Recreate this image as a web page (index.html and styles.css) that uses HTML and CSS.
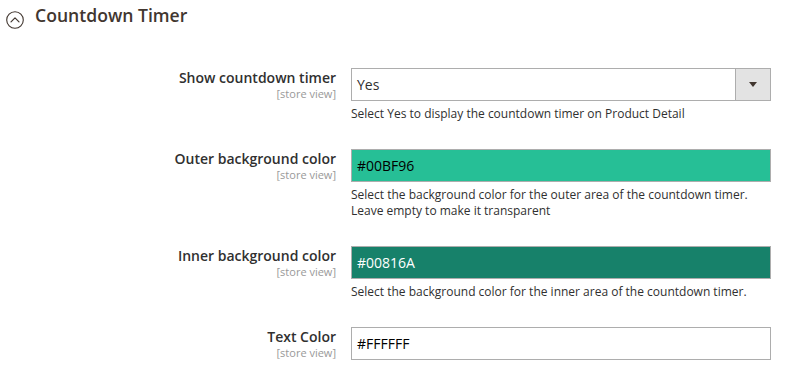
FILE: index.html
```html
<!DOCTYPE html>
<html lang="en">
<head>
<meta charset="utf-8">
<title>Countdown Timer</title>
<link rel="stylesheet" href="styles.css">
</head>
<body>
<div class="section">
  <div class="section-head">
    <svg class="toggle-icon" width="20" height="20" viewBox="0 0 20 20">
      <circle cx="10" cy="10" r="8.3" fill="none" stroke="#41362f" stroke-width="1.1"/>
      <path d="M6 11.8 L10 7.8 L14 11.8" fill="none" stroke="#41362f" stroke-width="1.2" stroke-linecap="round" stroke-linejoin="round"/>
    </svg>
    <span class="section-title">Countdown Timer</span>
  </div>

  <div class="form">
    <div class="row">
      <div class="label">
        <div class="label-text">Show countdown timer</div>
        <div class="scope">[store view]</div>
      </div>
      <div class="field">
        <div class="select">
          <span class="select-value">Yes</span>
          <span class="select-btn"><span class="arrow"></span></span>
        </div>
        <div class="note">Select Yes to display the countdown timer on Product Detail</div>
      </div>
    </div>

    <div class="row">
      <div class="label">
        <div class="label-text">Outer background color</div>
        <div class="scope">[store view]</div>
      </div>
      <div class="field">
        <div class="input outer">#00BF96</div>
        <div class="note">Select the background color for the outer area of the countdown timer.<br>Leave empty to make it transparent</div>
      </div>
    </div>

    <div class="row">
      <div class="label">
        <div class="label-text">Inner background color</div>
        <div class="scope">[store view]</div>
      </div>
      <div class="field">
        <div class="input inner">#00816A</div>
        <div class="note">Select the background color for the inner area of the countdown timer.</div>
      </div>
    </div>

    <div class="row last">
      <div class="label">
        <div class="label-text">Text Color</div>
        <div class="scope">[store view]</div>
      </div>
      <div class="field">
        <div class="input white">#FFFFFF</div>
      </div>
    </div>
  </div>
</div>
</body>
</html>
```

FILE: styles.css
```css
* { box-sizing: border-box; }
html, body {
  margin: 0;
  padding: 0;
  background: #ffffff;
  font-family: "Open Sans", "Liberation Sans", sans-serif;
  color: #303030;
}
.section-head {
  display: flex;
  align-items: flex-start;
  padding-top: 4px;
  padding-left: 5px;
  height: 27px;
}
.toggle-icon {
  display: block;
  margin-top: 6px;
  width: 20px;
  height: 20px;
  flex: none;
}
.section-title {
  margin-left: 10px;
  font-size: 17.6px;
  line-height: 23px;
  font-weight: 600;
  color: #41362f;
}
.form {
  margin-top: 41px;
}
.row {
  display: grid;
  grid-template-columns: 336px 420px;
  column-gap: 15px;
  margin-bottom: 27px;
}
.row.last {
  margin-bottom: 0;
}
.label {
  text-align: right;
}
.label-text {
  font-size: 14px;
  font-weight: 600;
  line-height: 19px;
  color: #303030;
}
.scope {
  font-size: 11px;
  line-height: 13px;
  color: #999999;
}
.select, .input {
  height: 33px;
  border: 1px solid #adadad;
  font-size: 14px;
  line-height: 31px;
  padding: 0 0 0 5px;
  color: #303030;
}
.select {
  display: flex;
  justify-content: space-between;
  padding-right: 0;
}
.select-btn {
  width: 35px;
  height: 31px;
  background: #e3e3e3;
  border-left: 1px solid #adadad;
  display: flex;
  align-items: center;
  justify-content: center;
}
.arrow {
  width: 0;
  height: 0;
  border-left: 4.5px solid transparent;
  border-right: 4.5px solid transparent;
  border-top: 5px solid #41362f;
}
.input.outer {
  background: #26bf96;
  color: #000000;
}
.input.inner {
  background: #17816a;
  color: #ffffff;
}
.input.white {
  background: #ffffff;
  color: #000000;
}
.note {
  margin-top: 5px;
  font-size: 12px;
  line-height: 16px;
  color: #303030;
}
```
